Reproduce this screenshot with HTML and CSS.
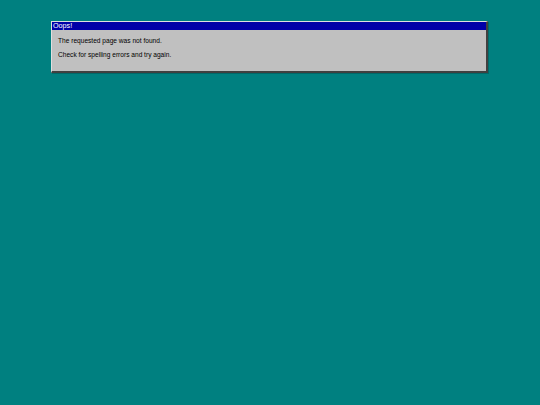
FILE: index.html
```html
<!DOCTYPE html>
<html>
<head>
<meta charset="utf-8">
<title>Oops!</title>
<link rel="stylesheet" href="styles.css">
</head>
<body>
<div class="desktop">
  <div class="window">
    <div class="titlebar">Oops!</div>
    <div class="content">
      <p class="line">The requested page was not found.</p>
      <p class="line">Check for spelling errors and try again.</p>
    </div>
  </div>
</div>
</body>
</html>
```

FILE: styles.css
```css
html, body {
  margin: 0;
  padding: 0;
  background: #008080;
  width: 540px;
  height: 405px;
  overflow: hidden;
}
.desktop {
  padding: 21px 0 0 51px;
}
.window {
  width: 434px;
  background: #c0c0c0;
  border-top: 1px solid #dfdfdf;
  border-left: 1px solid #dfdfdf;
  border-right: 2px solid #404040;
  border-bottom: 2px solid #404040;
  box-shadow: 1px 1px 0 #006868;
  font-family: "Liberation Sans", Arial, sans-serif;
}
.titlebar {
  background: #0000a8;
  color: #ffffff;
  font-size: 7.2px;
  line-height: 8px;
  height: 8px;
  padding-left: 1px;
}
.content {
  padding: 4px 0 9px 6px;
}
.line {
  margin: 0;
  font-size: 6.6px;
  line-height: 14px;
  color: #000;
}
```
